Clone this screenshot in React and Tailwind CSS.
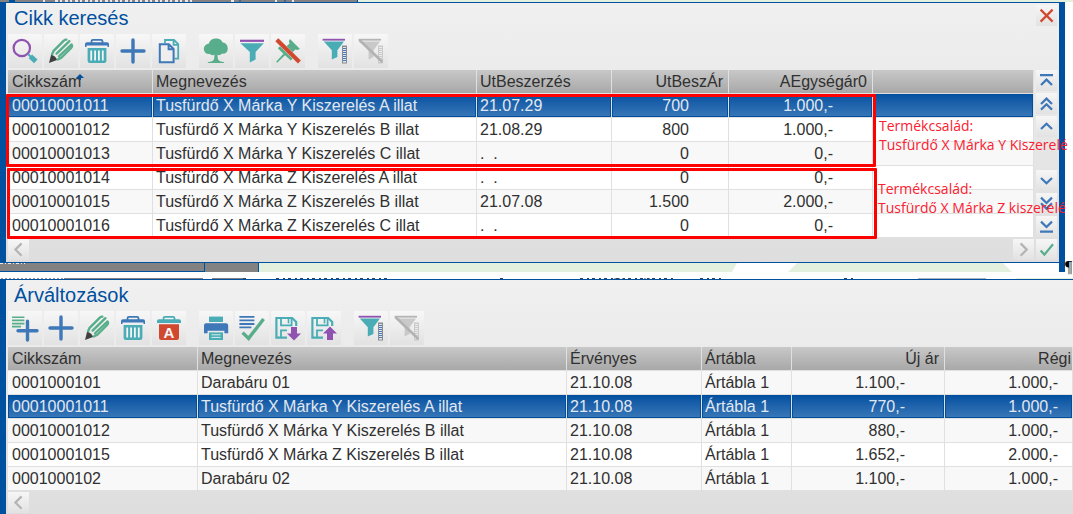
import React from "react";

const BLUE = "#3e78b8";
const TEAL = "#4aadb6";
const GREEN = "#58ae8a";
const PURPLE = "#8f52b0";
const RED = "#d0492f";

function Svg({ children, size = 34 }) {
  return (
    <svg width={size} height={size} viewBox={`0 0 ${size} ${size}`} fill="none" aria-hidden="true" className="block shrink-0">
      {children}
    </svg>
  );
}

function SearchIcon() {
  return (
    <Svg>
      <circle cx="13.8" cy="14" r="8.2" stroke={PURPLE} strokeWidth="2.2" />
      <path d="M20 20l3 3" stroke={TEAL} strokeWidth="2" />
      <path d="M22.4 22.4l5.4 5" stroke={TEAL} strokeWidth="5" />
    </Svg>
  );
}

function PencilIcon() {
  return (
    <Svg>
      <path d="M8 20.4L9.6 16.8L19.6 6.8Q21 5.6 22.4 5.6" stroke={GREEN} strokeWidth="2.4" strokeLinecap="round" strokeLinejoin="round" />
      <path d="M12.6 19.6L25.4 7.2" stroke={GREEN} strokeWidth="2.4" strokeLinecap="round" />
      <path d="M15 22.4L27.6 10.4Q28.8 12.4 27.2 14L17.4 23.8L13.8 25.6" stroke={GREEN} strokeWidth="2.2" strokeLinecap="round" strokeLinejoin="round" />
      <path d="M5 29L7 21Q11.6 21.4 13 26Z" fill="#404040" />
    </Svg>
  );
}

function TrashIcon() {
  return (
    <Svg>
      <path d="M11.5 9V7.2Q11.5 5.8 13 5.8H21Q22.5 5.8 22.5 7.2V9" stroke={BLUE} strokeWidth="1.8" />
      <path d="M5 13V10Q5 8.3 7 8.3H27Q29 8.3 29 10V13H27.5V11.5H6.5V13Z" fill={BLUE} />
      <path d="M7.6 14H26.4V26.8Q26.4 29 24.2 29H9.8Q7.6 29 7.6 26.8Z" fill={TEAL} />
      <path d="M11.2 16.5V26.5M15.1 16.5V26.5M18.9 16.5V26.5M22.8 16.5V26.5" stroke="#f4f4f4" strokeWidth="1.8" />
    </Svg>
  );
}

function TrashAllIcon() {
  return (
    <Svg>
      <path d="M11.5 9V7.2Q11.5 5.8 13 5.8H21Q22.5 5.8 22.5 7.2V9" stroke={TEAL} strokeWidth="1.8" />
      <path d="M5 12V10Q5 8.3 7 8.3H27Q29 8.3 29 10V12Z" fill={TEAL} />
      <path d="M7 13.2H27V26.8Q27 29 24.8 29H9.2Q7 29 7 26.8Z" fill={RED} />
      <text x="17" y="26.5" textAnchor="middle" fontFamily="Liberation Sans, sans-serif" fontWeight="700" fontSize="15" fill="#f6f6f6">A</text>
    </Svg>
  );
}

function PlusIcon() {
  return (
    <Svg>
      <path d="M6 17H28M17 6V28" stroke={BLUE} strokeWidth="3.4" strokeLinecap="round" />
    </Svg>
  );
}

function CopyIcon() {
  return (
    <Svg>
      <path d="M13 9V6H22L26.2 10.2V24.6H22.6M21.6 6V10.8H26.2" stroke={TEAL} strokeWidth="1.8" />
      <path d="M7.8 10.2H16.8L21.6 15V28.2H7.8ZM16.6 10.2V15.2H21.6" stroke={BLUE} strokeWidth="2" fill="#eee" />
    </Svg>
  );
}

function TreeIcon() {
  return (
    <Svg>
      <path d="M17 4.6Q21.6 4.2 23.4 8.2Q28.6 9.2 28.8 14.6Q28.6 20 23 19.8Q20.6 22 18.6 20.8Q18.2 26.8 21 27.2L25 28.2V29H8.8V28.2L13 27.2Q15.8 26.6 15.4 20.8Q13 22 11 20Q5.2 20.4 4.8 15Q5 10.6 9.8 9.4Q11.4 4.8 17 4.6Z" fill={GREEN} />
    </Svg>
  );
}

function FunnelIcon() {
  return (
    <Svg>
      <path d="M5 6.8H29" stroke={PURPLE} strokeWidth="2.2" />
      <path d="M5.4 9.2H28.8L20.6 18V25.4L14.8 28.6V18Z" fill={TEAL} />
    </Svg>
  );
}

function UnpinIcon() {
  return (
    <Svg>
      <path d="M19 5L29 15L26.2 16L24.4 15.4L21.4 18.4L22.4 24L19.8 26.6L14 21.2L6.2 28.8L5.2 27.8L12.4 19.8L6.8 14.2L9.6 11.8L15.2 12.6L18.6 9.4L17.8 7.2Z" fill={GREEN} />
      <path d="M6 6L28.6 28.2" stroke="#e9d9d4" strokeWidth="4.8" />
      <path d="M5.8 5.8L28.4 28" stroke={RED} strokeWidth="4" />
    </Svg>
  );
}

function FunnelColumnIcon() {
  return (
    <Svg>
      <path d="M4.6 5.7H27" stroke={PURPLE} strokeWidth="1.8" />
      <path d="M5.8 7.4H26L19.4 16.2V23L13.8 25.4V16.2Z" fill={TEAL} />
      <rect x="24" y="11.5" width="5" height="18" fill="#8a8a8a" />
      <path d="M26.5 13V28.5" stroke="#dce8f8" strokeWidth="3" />
      <path d="M26.5 14V28" stroke="#4c78b4" strokeWidth="3" strokeDasharray="1 1" />
    </Svg>
  );
}

function FunnelColumnOffIcon() {
  return (
    <Svg>
      <path d="M4.6 5.7H27" stroke="#b4b4b4" strokeWidth="1.8" />
      <path d="M8 7.4H26L19.6 16.2V23L14.6 25.4V16.2Z" fill="#c9c9c9" />
      <rect x="24" y="11.5" width="5" height="18" fill="#cacaca" />
      <path d="M26.5 13V28.5" stroke="#ececec" strokeWidth="3" strokeDasharray="1 1" />
      <path d="M5.4 6L28.4 28" stroke="#b2b2b2" strokeWidth="2.6" />
    </Svg>
  );
}

function ListAddIcon() {
  return (
    <Svg>
      <path d="M4 6.2H16.4M4 9.4H16.4M4 12.6H16.4M4 15.6H13" stroke={GREEN} strokeWidth="1.6" />
      <path d="M10 19.8H29M19.5 10.2V29" stroke={BLUE} strokeWidth="3.4" strokeLinecap="round" />
    </Svg>
  );
}

function PrintIcon() {
  return (
    <Svg>
      <rect x="10" y="5.6" width="14" height="5.4" fill={TEAL} />
      <path d="M7 12.2H27Q29.2 12.2 29.2 14.4V22.2H25.4V19.8H8.6V22.2H5V14.4Q5 12.2 7 12.2Z" fill={BLUE} />
      <rect x="10" y="21.4" width="14" height="7.6" fill={TEAL} />
      <path d="M12.4 23.8H21.6M12.4 26.4H21.6" stroke="#d5eef0" strokeWidth="1" />
    </Svg>
  );
}

function ListCheckIcon() {
  return (
    <Svg>
      <path d="M4.4 5.8H19.4M4.4 9.4H19.4M4.4 13H19.4M4.4 16.4H16.4" stroke={BLUE} strokeWidth="1.8" />
      <path d="M7.6 21.6L13.6 27.4L28.6 8" stroke={GREEN} strokeWidth="3.4" />
    </Svg>
  );
}

function SaveIcon({ up }) {
  return (
    <Svg>
      <path d="M16 26.6H5.4V7H21.2L25.2 11V15" stroke={TEAL} strokeWidth="2.2" />
      <path d="M10 7V14.4H20.6V7M10 26V19.4H16" stroke={TEAL} strokeWidth="1.8" />
      <path d="M17.5 8V12.4" stroke={TEAL} strokeWidth="1.6" />
      {up ? (
        <path d="M23 15.6L30 22.6H26V29H20V22.6H16Z" fill={PURPLE} />
      ) : (
        <path d="M23 29.4L30 22.4H26V16H20V22.4H16Z" fill={PURPLE} />
      )}
    </Svg>
  );
}

const NAV_PATHS = {
  first: "M4 5.2H17M5 15L10.5 9.6L16 15",
  pageUp: "M5 11L10.5 5.6L16 11M5 16.6L10.5 11.2L16 16.6",
  up: "M5 13L10.5 7.8L16 13",
  down: "M5 8L10.5 13.2L16 8",
  pageDown: "M5 4.6L10.5 10L16 4.6M5 10.2L10.5 15.6L16 10.2",
  last: "M5 5.6L10.5 11L16 5.6M4 15.6H17",
  left: "M13.6 4.4L7.4 10.6L13.6 16.8",
  right: "M7.6 4.4L13.8 10.6L7.6 16.8",
  check: "M4.6 11.6L8.4 15.6L17 5.2",
  close: "M4.6 4.6L16.6 16.6M16.6 4.6L4.6 16.6",
};

function NavButton({ kind, label, color = BLUE }) {
  return (
    <button type="button" aria-label={label} className="size-[21px] shrink-0 bg-linear-to-b from-[#f6f6f6] to-[#e2e2e2]">
      <Svg size={21}>
        <path d={NAV_PATHS[kind]} stroke={color} strokeWidth="2.2" />
      </Svg>
    </button>
  );
}

function Toolbar({ groups }) {
  return (
    <div className="flex gap-[13px] pl-0.5">
      {groups.map((group, i) => (
        <div key={i} className="flex gap-0.5">
          {group.map(([label, icon]) => (
            <button key={label} type="button" aria-label={label} className="size-[34px] shrink-0 bg-linear-to-b from-[#f7f7f7] to-[#e2e2e2]">
              {icon}
            </button>
          ))}
        </div>
      ))}
    </div>
  );
}

const LEFT = "pl-[3px] text-left first:pl-1";

function Grid({ label, columns, rows, selected }) {
  return (
    <table aria-label={label} className="w-full table-fixed border-separate border-spacing-0 text-base leading-[22px] text-[#303030]">
      <colgroup>
        {columns.map((c, i) => (
          <col key={i} className={c.width} />
        ))}
      </colgroup>
      <thead>
        <tr>
          {columns.map((c, i) => (
            <th
              key={i}
              scope="col"
              className={`h-6 border-r border-b border-[#e0e0e0] bg-linear-to-b from-[#c8c8c8] to-[#a8a8a8] bg-clip-padding p-0 font-normal whitespace-nowrap ${c.head ?? LEFT}`}
            >
              {c.name}
              {c.sorted && (
                <svg width="8" height="13" viewBox="0 0 8 13" aria-hidden="true" className="-ml-[5px] inline-block align-baseline">
                  <path d="M0 4L4 0L8 4H5V6H3V4Z" fill="#0050a0" />
                </svg>
              )}
            </th>
          ))}
        </tr>
      </thead>
      <tbody>
        {rows.map((row, r) => {
          const tone =
            r === selected
              ? "bg-linear-to-b from-[#0050a0] to-[#3878b8] text-[#e2e8f0] shadow-[inset_0_0_0_1px_#004f9f]"
              : r % 2 === 0
                ? "bg-[#f8f8f8]"
                : "bg-white";
          return (
            <tr key={r} aria-selected={r === selected}>
              {columns.map((c, i) => (
                <td key={i} className={`h-6 border-r border-b border-[#e0e0e0] bg-clip-padding p-0 whitespace-pre ${tone} ${c.cell ?? LEFT}`}>
                  {row[i]}
                </td>
              ))}
            </tr>
          );
        })}
      </tbody>
    </table>
  );
}

const numeric = { head: "pr-[5px] text-right", cell: "pr-[39px] text-right" };

const itemColumns = [
  { name: "Cikkszám", width: "w-[145px]", sorted: true },
  { name: "Megnevezés", width: "w-[324px]" },
  { name: "UtBeszerzés", width: "w-[135px]" },
  { name: "UtBeszÁr", width: "w-[117px]", ...numeric },
  { name: "AEgységár0", width: "w-[144px]", ...numeric },
  { name: "", width: "" },
];

const itemRows = [
  ["00010001011", "Tusfürdő X Márka Y Kiszerelés A illat", "21.07.29", "700", "1.000,-", ""],
  ["00010001012", "Tusfürdő X Márka Y Kiszerelés B illat", "21.08.29", "800", "1.000,-", ""],
  ["00010001013", "Tusfürdő X Márka Y Kiszerelés C illat", ".  .", "0", "0,-", ""],
  ["00010001014", "Tusfürdő X Márka Z Kiszerelés A illat", ".  .", "0", "0,-", ""],
  ["00010001015", "Tusfürdő X Márka Z Kiszerelés B illat", "21.07.08", "1.500", "2.000,-", ""],
  ["00010001016", "Tusfürdő X Márka Z Kiszerelés C illat", ".  .", "0", "0,-", ""],
];

const priceColumns = [
  { name: "Cikkszám", width: "w-[190px]" },
  { name: "Megnevezés", width: "w-[369px]" },
  { name: "Érvényes", width: "w-[135px]" },
  { name: "Ártábla", width: "w-[90px]" },
  { name: "Új ár", width: "w-[153px]", ...numeric },
  { name: "Régi", width: "", head: "pr-px text-right", cell: "pr-[14px] text-right" },
];

const priceRows = [
  ["0001000101", "Darabáru 01", "21.10.08", "Ártábla 1", "1.100,-", "1.000,-"],
  ["00010001011", "Tusfürdő X Márka Y Kiszerelés A illat", "21.10.08", "Ártábla 1", "770,-", "1.000,-"],
  ["00010001012", "Tusfürdő X Márka Y Kiszerelés B illat", "21.10.08", "Ártábla 1", "880,-", "1.000,-"],
  ["00010001015", "Tusfürdő X Márka Z Kiszerelés B illat", "21.10.08", "Ártábla 1", "1.652,-", "2.000,-"],
  ["0001000102", "Darabáru 02", "21.10.08", "Ártábla 1", "1.100,-", "1.000,-"],
];

const itemTools = [
  [
    ["Keresés", <SearchIcon />],
    ["Módosítás", <PencilIcon />],
    ["Törlés", <TrashIcon />],
    ["Új", <PlusIcon />],
    ["Másolás", <CopyIcon />],
  ],
  [
    ["Fa nézet", <TreeIcon />],
    ["Szűrés", <FunnelIcon />],
    ["Rögzítés feloldása", <UnpinIcon />],
  ],
  [
    ["Oszlopszűrő", <FunnelColumnIcon />],
    ["Oszlopszűrő törlése", <FunnelColumnOffIcon />],
  ],
];

const priceTools = [
  [
    ["Lista hozzáadása", <ListAddIcon />],
    ["Új", <PlusIcon />],
    ["Módosítás", <PencilIcon />],
    ["Törlés", <TrashIcon />],
    ["Összes törlése", <TrashAllIcon />],
  ],
  [
    ["Nyomtatás", <PrintIcon />],
    ["Kijelölés", <ListCheckIcon />],
    ["Mentés", <SaveIcon />],
    ["Betöltés", <SaveIcon up />],
  ],
  [
    ["Oszlopszűrő", <FunnelColumnIcon />],
    ["Oszlopszűrő törlése", <FunnelColumnOffIcon />],
  ],
];

function Note({ family, className }) {
  return (
    <p className={`absolute font-['Open_Sans',sans-serif] text-sm leading-[19px] whitespace-nowrap text-[#fa2030] ${className}`}>
      Termékcsalád:
      <br />
      {family}
    </p>
  );
}

function ItemSearch() {
  return (
    <section className="relative mr-2 border-x-[6px] border-y border-[#0050a0] bg-linear-to-b from-[#f0f0f0] to-[#dedede]">
      <header className="flex h-[31px] items-start justify-between pt-0.5 pr-0.5 pl-2">
        <h1 className="text-xl leading-[26px] text-[#0050a0]">Cikk keresés</h1>
        <NavButton kind="close" label="Bezárás" color={RED} />
      </header>
      <Toolbar groups={itemTools} />
      <div className="flex gap-0.5 px-0.5 pt-0.5">
        <div className="min-w-0 flex-1">
          <Grid label="Cikkek" columns={itemColumns} rows={itemRows} selected={0} />
        </div>
        <div className="flex flex-col justify-between pb-px">
          <div className="flex flex-col gap-0.5">
            <NavButton kind="first" label="Első" />
            <NavButton kind="pageUp" label="Előző oldal" />
            <NavButton kind="up" label="Előző" />
          </div>
          <div className="flex flex-col gap-0.5">
            <NavButton kind="down" label="Következő" />
            <NavButton kind="pageDown" label="Következő oldal" />
            <NavButton kind="last" label="Utolsó" />
          </div>
        </div>
      </div>
      <div className="flex gap-0.5 px-0.5 pt-px pb-0.5">
        <NavButton kind="left" label="Balra" color="#b4b4b4" />
        <div className="flex-1" />
        <NavButton kind="right" label="Jobbra" color="#b4b4b4" />
        <NavButton kind="check" label="Rendben" color={GREEN} />
      </div>
      <div className="absolute top-[91px] left-0 h-[73px] w-[870px] rounded-[1px] border-[3px] border-[#ff0000]" />
      <div className="absolute top-[165px] left-px h-[71px] w-[870px] rounded-[1px] border-[3px] border-[#ff0000]" />
      <Note family="Tusfürdő X Márka Y Kiszerelé" className="top-[113px] left-[873px]" />
      <Note family="Tusfürdő X Márka Z kiszerelé" className="top-[176px] left-[872px]" />
    </section>
  );
}

function PriceChanges() {
  return (
    <section className="flex-1 border-t border-l-[6px] border-[#0050a0] bg-linear-to-b from-[#f0f0f0] to-[#dedede]">
      <header className="flex h-[31px] items-start pt-0.5 pl-2">
        <h2 className="text-xl leading-[26px] text-[#0050a0]">Árváltozások</h2>
      </header>
      <Toolbar groups={priceTools} />
      <div className="pt-0.5 pl-0.5">
        <Grid label="Árváltozások" columns={priceColumns} rows={priceRows} selected={1} />
      </div>
      <div className="flex pt-px pl-0.5">
        <NavButton kind="left" label="Balra" color="#b4b4b4" />
      </div>
    </section>
  );
}

export default function App() {
  return (
    <main className="flex min-h-screen flex-col overflow-hidden bg-white font-['Liberation_Sans',Arial,sans-serif]">
      <div className="flex h-0.5 bg-[#e4f0de]">
        <div className="w-[9px] bg-[#828282]" />
        <div className="w-1.5 bg-[#0050a0]" />
        <div className="w-[343px] border-r border-[#0050a0] bg-[#828282]">
          <svg width="342" height="2" aria-hidden="true" className="block">
            <path d="M28 1H30M40 1H177M216 1H219M260 1H262M277 1H279" stroke="#e8e8e8" strokeWidth="2" strokeDasharray="3 2 2 3" />
            <path d="M225 0V2M270 0V2" stroke="#0050a0" />
          </svg>
        </div>
      </div>
      <ItemSearch />
      <div className="relative flex h-[9px] justify-between">
        <div className="flex">
          <div className="w-[205px] border-r border-b border-[#0050a0] bg-[#828282]">
            <svg width="30" height="2" aria-hidden="true" className="block">
              <path d="M0 .5H25" stroke="#e8e8e8" strokeDasharray="3 2 1 2" />
            </svg>
          </div>
          <div className="w-[54px] border-r border-[#0050a0] bg-[#828282]" />
          <svg width="754" height="9" aria-hidden="true" className="block">
            <path d="M0 0H478L473 9H0ZM538 0H744L753 9H529Z" fill="#e4f0de" />
          </svg>
        </div>
        <div className="mr-2 w-1.5 bg-[#0050a0]" />
        <span className="absolute -top-1 right-0 w-2 font-['Liberation_Serif',serif] text-base leading-4 text-black">¶</span>
      </div>
      <div className="flex h-[7px] items-end">
        <svg width="1073" height="1" aria-hidden="true" className="block shrink-0">
          <path d="M64 .5H203M212 .5H243" stroke="#828282" />
          <path d="M1 .5H64M614 .5H624M644 .5H654" stroke="#999" strokeDasharray="2 2" />
          <path d="M243 .5H249M276 .5H390M500 .5H506M580 .5H674M700 .5H722M844 .5H853" stroke="#27466e" strokeDasharray="3 4 2 3" />
          <path d="M918 .5H986" stroke="#a9b4c0" />
          <path d="M1016 .5H1073" stroke="#e4f0de" />
        </svg>
      </div>
      <PriceChanges />
    </main>
  );
}
